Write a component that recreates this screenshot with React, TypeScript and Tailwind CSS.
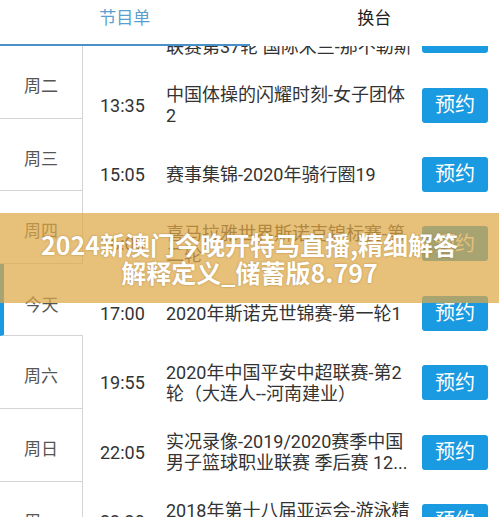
import React from 'react';

const days = [
  { label: '周二' },
  { label: '周三' },
  { label: '周四' },
  { label: '今天', active: true },
  { label: '周六' },
  { label: '周日' },
  { label: '周一' },
];

const programs = [
  { time: '12:00', lines: ['2019/2020赛季意大利足球甲级', '联赛第37轮 国际米兰-那不勒斯'] },
  { time: '13:35', lines: ['中国体操的闪耀时刻-女子团体', '2'] },
  { time: '15:05', lines: ['赛事集锦-2020年骑行圈19'] },
  { time: '16:00', lines: ['喜马拉雅世界斯诺克锦标赛-第', '二轮'] },
  { time: '17:00', lines: ['2020年斯诺克世锦赛-第一轮1'] },
  { time: '19:55', lines: ['2020年中国平安中超联赛-第2', '轮（大连人--河南建业）'] },
  { time: '22:05', lines: ['实况录像-2019/2020赛季中国', '男子篮球职业联赛 季后赛 12...'] },
  { time: '23:30', lines: ['2018年第十八届亚运会-游泳精', '选'] },
];

const font = { fontFamily: "Roboto, 'Noto Sans CJK SC', sans-serif" };

export default function App() {
  return (
    <div className="relative w-[499px] h-[517px] overflow-hidden bg-white" style={font}>
      {/* tabs */}
      <div className="relative z-10 flex h-[46px] bg-white">
        <div className="flex w-1/2 flex-col">
          <div className="flex flex-1 items-center justify-center pb-[6px] text-[17px] text-[#5a9fd0]">节目单</div>
          <div className="h-[2px] bg-[#4b91c9]" />
        </div>
        <div className="flex w-1/2 items-center justify-center pb-[8px] text-[17px] text-[#222]">换台</div>
      </div>

      <div className="flex h-[471px]">
        {/* day list */}
        <div className="w-[83px] shrink-0">
          {days.map((d) =>
            d.active ? (
              <div key={d.label} className="flex h-[72.6px] border-l-[4px] border-b border-[#1a9ae0] border-b-[#d4d4d4] pr-[4px] items-center justify-center pt-[12px] text-[17px] text-[#555]">
                {d.label}
              </div>
            ) : (
              <div key={d.label} className="flex h-[72.6px] items-center justify-center border-r border-b border-[#d4d4d4] pt-[10px] text-[17px] text-[#555]">
                {d.label}
              </div>
            )
          )}
        </div>

        {/* program list */}
        <div className="flex-1 overflow-hidden">
          <div className="-mt-[45px]">
            {programs.map((p, i) => (
              <div key={i} className="flex h-[69.4px] items-center">
                <div className="w-[83px] pl-[17px] text-[18px] text-[#333]">{p.time}</div>
                <div className="w-[257px] text-[18px] leading-[21px] text-[#333]">
                  {p.lines.map((l, j) => (
                    <div key={j} className="whitespace-nowrap">{l}</div>
                  ))}
                </div>
                <button className="ml-[-1px] flex h-[35px] w-[66px] items-center justify-center rounded-[3px] bg-[#1a9ae0] text-[20px] text-white">
                  预约
                </button>
              </div>
            ))}
          </div>
        </div>
      </div>

      {/* banner overlay */}
      <div className="absolute left-0 right-0 top-[213px] z-20 flex h-[90px] flex-col items-center justify-center bg-[rgba(222,167,70,0.72)]">
        <div
          className="text-center text-[25px] font-bold leading-[28px] text-white [text-shadow:0_0_2px_rgba(120,80,20,0.5)]"
          style={{ fontFamily: "'Noto Sans CJK SC', sans-serif" }}
        >
          <div>2024新澳门今晚开特马直播,精细解答</div>
          <div>解释定义_储蓄版8.797</div>
        </div>
      </div>
    </div>
  );
}
